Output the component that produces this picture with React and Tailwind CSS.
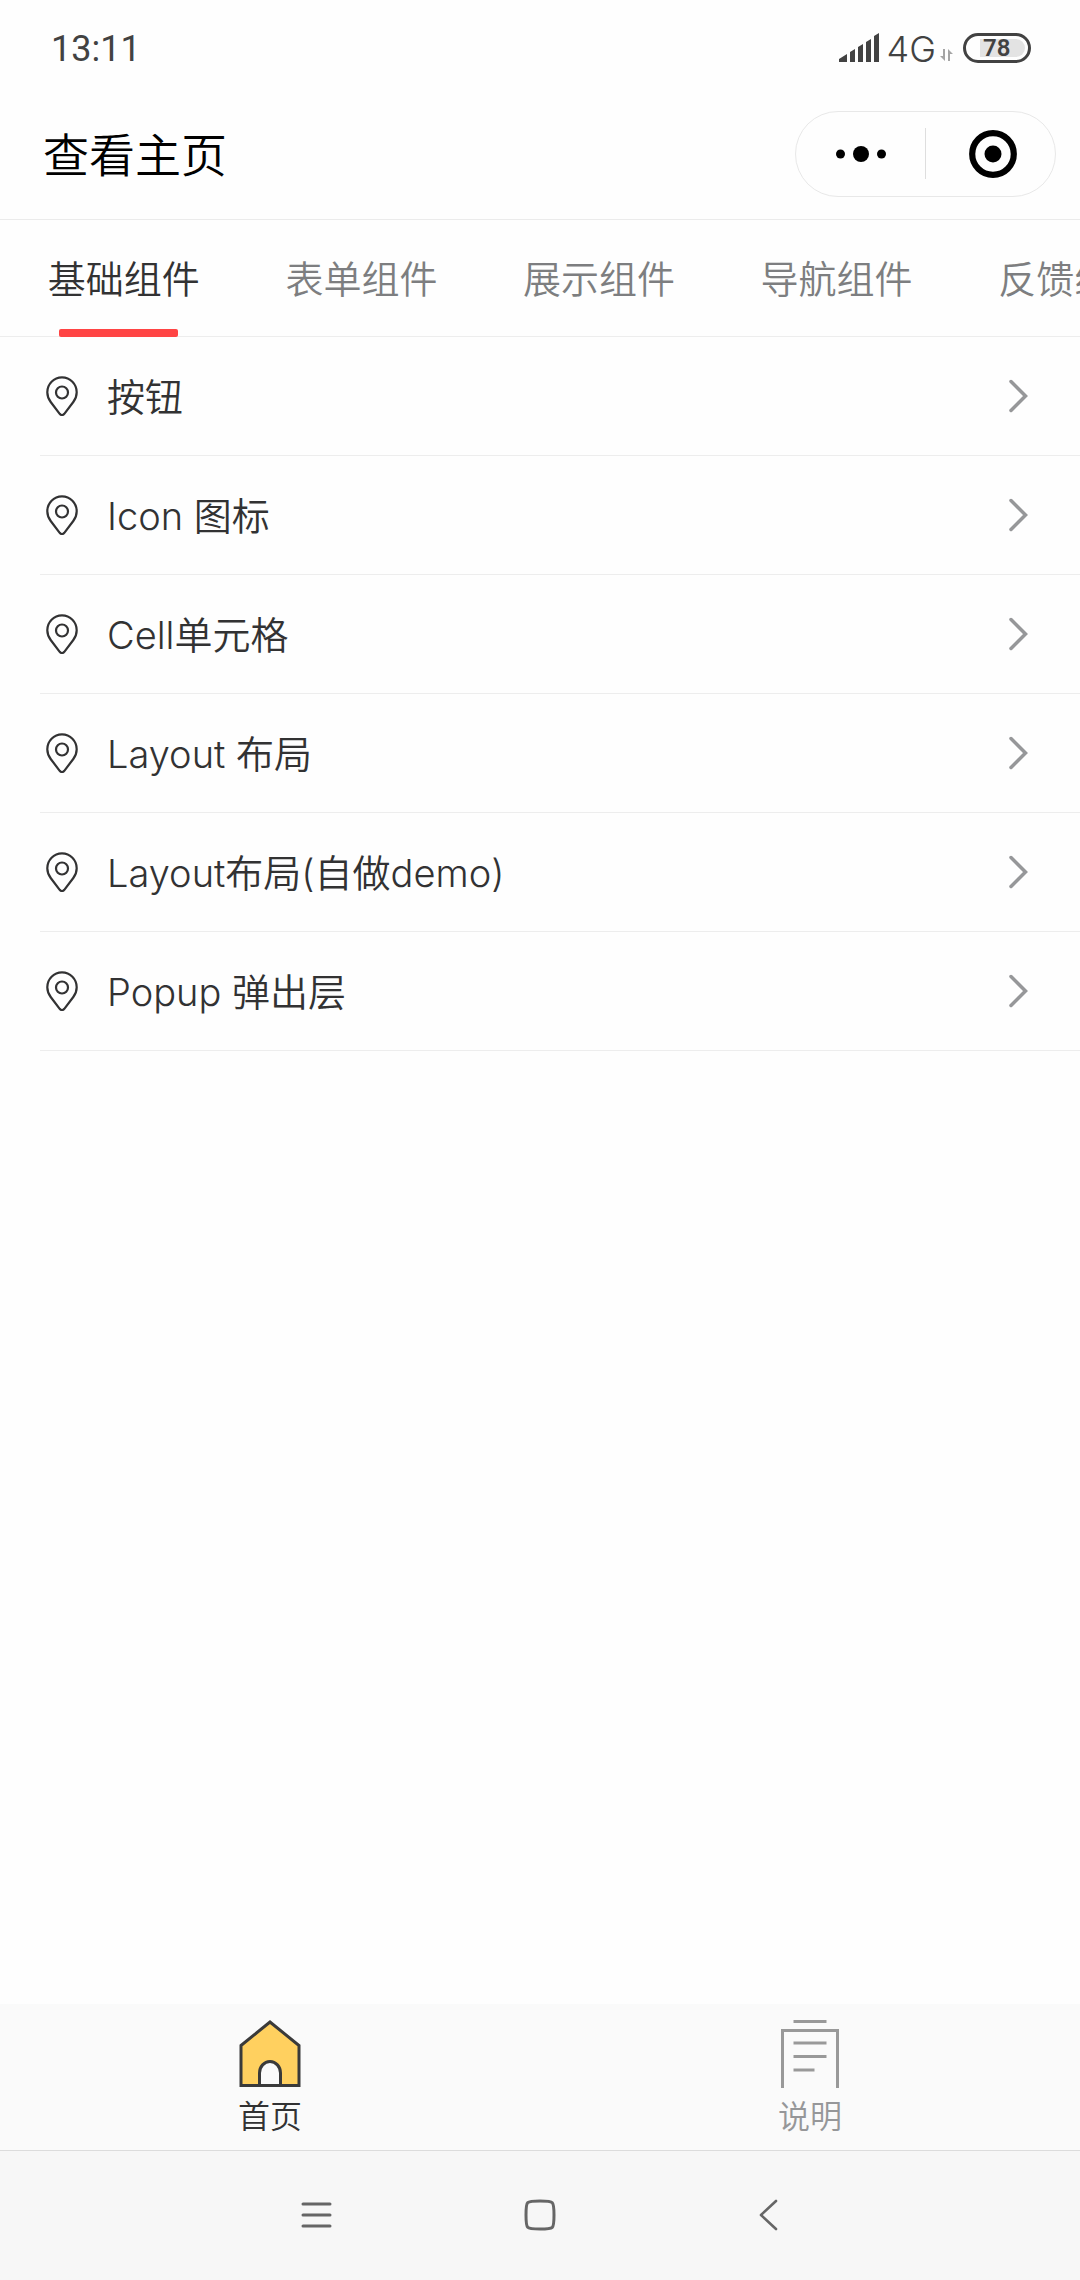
const tabs = ["基础组件", "表单组件", "展示组件", "导航组件", "反馈组件"];

const rows = [
  "按钮",
  "Icon 图标",
  "Cell单元格",
  "Layout 布局",
  "Layout布局(自做demo)",
  "Popup 弹出层",
];

function StatusBar() {
  return (
    <div className="flex h-[88px] items-center justify-between pt-2 pr-[49px] pl-[51px] text-[#424242]">
      <span className="pt-0.5 font-['Roboto','Noto_Sans_CJK_SC',sans-serif] text-[36px] leading-none font-normal">13:11</span>
      <div className="flex items-center">
        <svg className="mr-2 h-[30px] w-10" viewBox="0 0 40 30" fill="currentColor" aria-hidden="true">
          <path d="M0 29V26L8 21V29ZM11 29V19L16 16V29ZM19 29V14L24 11V29ZM27 29V9L32 6V29ZM35 29V3L40 0V29Z" />
        </svg>
        <span className="pt-0.5 font-['Inter','Noto_Sans_CJK_SC',sans-serif] text-[36px] leading-none font-[350]">4G</span>
        <svg className="mr-[10px] ml-1 h-[30px] w-[13px]" viewBox="0 0 13 30" fill="#a5a5a5" aria-hidden="true">
          <path d="M3 16H5V28L0 23H3ZM8 28V16L13 21H10V28Z" />
        </svg>
        <div className="flex h-[30px] w-[68px] items-center rounded-full border-3 border-[#424242] pl-[14px]">
          <div className="flex h-[18px] w-[45px] items-center rounded-l-xs rounded-r-full bg-[#e3e3e3] pl-[3px] font-['Roboto',sans-serif] text-[24px] leading-none font-semibold">
            78
          </div>
        </div>
      </div>
    </div>
  );
}

function TitleBar() {
  return (
    <header className="flex h-[132px] items-center justify-between border-b border-[#ebebeb] pr-6 pl-[43px]">
      <h1 className="pt-0.5 text-[46px] leading-none font-[350] text-black">查看主页</h1>
      <div className="flex h-[86px] w-[261px] items-center rounded-full border border-[#e8e8e8]">
        <button type="button" aria-label="更多" className="flex w-[129px] justify-center">
          <svg className="h-[18px] w-[52px]" viewBox="0 0 52 18" aria-hidden="true">
            <circle cx="5.500" cy="9" r="4.500" />
            <circle cx="26" cy="9" r="8" />
            <circle cx="46.500" cy="9" r="4.500" />
          </svg>
        </button>
        <span className="h-[51px] w-px bg-[#dedede]" />
        <button type="button" aria-label="关闭" className="flex flex-1 justify-center pl-1">
          <svg className="size-12" viewBox="0 0 48 48" aria-hidden="true">
            <circle cx="24" cy="24" r="20.800" fill="none" stroke="#000" strokeWidth="6.200" />
            <circle cx="24" cy="24" r="8.500" />
          </svg>
        </button>
      </div>
    </header>
  );
}

function Tabs() {
  return (
    <div role="tablist" className="flex h-[117px] overflow-hidden shadow-[inset_0_-1px_0_#ededed]">
      {tabs.map((label, i) => (
        <button
          key={label}
          type="button"
          role="tab"
          aria-selected={i === 0}
          className="relative flex w-[22%] shrink-0 items-center justify-center pl-2.5 text-[38px] leading-none font-[350] whitespace-nowrap text-[#7d7e80] aria-selected:text-[#323233]"
        >
          {label}
          {i === 0 && <span className="absolute inset-x-1/4 bottom-0 h-2 rounded-xs bg-[#ff4444]" />}
        </button>
      ))}
    </div>
  );
}

function PinIcon() {
  return (
    <svg
      className="h-10 w-8 shrink-0"
      viewBox="0 0 32 40"
      fill="none"
      stroke="#323233"
      strokeWidth="2.200"
      strokeLinejoin="round"
      aria-hidden="true"
    >
      <path d="M16 1.300C7.800 1.300 1.300 8 1.300 16.200c0 4 1.200 6.800 3.400 9.800l9 11.800c1.400 1.700 3.200 1.700 4.600 0l9-11.800c2.200-3 3.400-5.800 3.400-9.800C30.700 8 24.200 1.300 16 1.300Z" />
      <circle cx="16" cy="16.500" r="6" />
    </svg>
  );
}

function Row({ label }) {
  return (
    <li className="ml-10 border-b border-[#ededed]">
      <a href="#" className="flex h-[118px] items-center pr-[52px] pl-[6px] text-[#323233]">
        <PinIcon />
        <span className="ml-[29px] flex-1 pt-0.5 text-[38px] leading-none font-[350]">{label}</span>
        <svg className="h-[34px] w-5" viewBox="0 0 20 34" fill="none" stroke="#969799" strokeWidth="3.500" strokeLinecap="round" aria-hidden="true">
          <path d="M3 2.500L17.500 17L3 31.500" />
        </svg>
      </a>
    </li>
  );
}

function BottomTabs() {
  return (
    <nav className="flex h-[147px] border-b border-[#dcdcdc] bg-[#fafafa] pt-[15px]">
      <button type="button" aria-current="page" className="flex flex-1 flex-col items-center gap-3 text-[#323233]">
        <svg className="h-[70px] w-[62px]" viewBox="0 0 62 70" stroke="#3a3a3a" strokeWidth="3" aria-hidden="true">
          <path d="M2 26.500L31 3L60 26.500V66.500H2Z" fill="#ffd05f" />
          <path d="M20.500 66.500V54a10.500 11.500 0 0 1 21 0V66.500Z" fill="#fafafa" />
        </svg>
        <span className="text-[32px] leading-none font-[350]">首页</span>
      </button>
      <button type="button" className="flex flex-1 flex-col items-center gap-3 text-[#969799]">
        <svg className="h-[70px] w-[62px]" viewBox="0 0 62 70" fill="none" stroke="#999" strokeWidth="3" aria-hidden="true">
          <path d="M14.500 2.500H47.500M3.500 69V11.500H58.500V69M14.500 24H47.500M14.500 37.500H47.500M14.500 51H35.500" />
        </svg>
        <span className="text-[32px] leading-none font-[350]">说明</span>
      </button>
    </nav>
  );
}

function SystemNav() {
  return (
    <div className="flex h-[129px] items-center justify-center bg-[#f7f7f7] pb-0.5">
      <button type="button" aria-label="最近任务" className="flex w-[226px] justify-center pl-1">
        <svg className="size-8" viewBox="0 0 32 32" fill="none" stroke="#666" strokeWidth="3" strokeLinecap="round" aria-hidden="true">
          <path d="M3 5H30M3 16H30M3 27H30" />
        </svg>
      </button>
      <button type="button" aria-label="主屏幕" className="flex w-[226px] justify-center">
        <svg className="size-8" viewBox="0 0 32 32" fill="none" stroke="#666" strokeWidth="3" aria-hidden="true">
          <path d="M16 2C25 2 27 2.300 28.300 3.700S30 7 30 16S29.700 27 28.300 28.300S25 30 16 30S5 29.700 3.700 28.300S2 25 2 16S2.300 5 3.700 3.700S7 2 16 2Z" />
        </svg>
      </button>
      <button type="button" aria-label="返回" className="flex w-[226px] justify-center">
        <svg className="size-8" viewBox="0 0 32 32" fill="none" stroke="#666" strokeWidth="2.600" strokeLinecap="round" strokeLinejoin="round" aria-hidden="true">
          <path d="M26 2L11 16L26 30" />
        </svg>
      </button>
    </div>
  );
}

export default function App() {
  return (
    <div className="flex min-h-screen flex-col bg-[#fefefe] font-['Inter','Noto_Sans_CJK_SC',sans-serif]">
      <StatusBar />
      <TitleBar />
      <Tabs />
      <main className="flex-1">
        <ul>
          {rows.map((label) => (
            <Row key={label} label={label} />
          ))}
        </ul>
      </main>
      <BottomTabs />
      <SystemNav />
    </div>
  );
}
